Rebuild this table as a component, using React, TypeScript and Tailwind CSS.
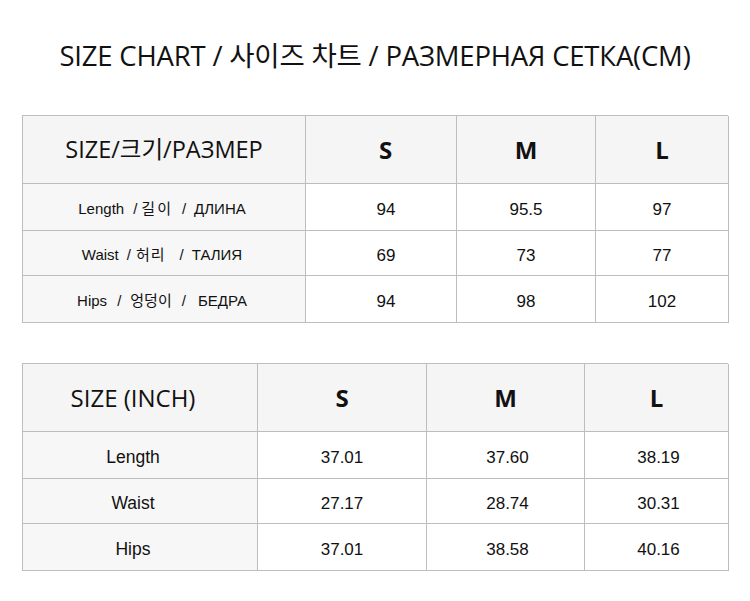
type Part = { text: string; cls: string };

const cmRows: { parts: Part[]; values: string[]; h: string }[] = [
  {
    parts: [
      { text: 'Length', cls: '' },
      { text: '/', cls: 'ml-[9px]' },
      { text: '길이', cls: 'ml-[4px] tracking-[2px]' },
      { text: '/', cls: 'ml-[9px]' },
      { text: 'ДЛИНА', cls: 'ml-[8px]' },
    ],
    values: ['94', '95.5', '97'],
    h: 'h-[47px]',
  },
  {
    parts: [
      { text: 'Waist', cls: '' },
      { text: '/', cls: 'ml-[8px]' },
      { text: '허리', cls: 'ml-[5px] tracking-[1px]' },
      { text: '/', cls: 'ml-[14px]' },
      { text: 'ТАЛИЯ', cls: 'ml-[8px]' },
    ],
    values: ['69', '73', '77'],
    h: 'h-[45px]',
  },
  {
    parts: [
      { text: 'Hips', cls: '' },
      { text: '/', cls: 'ml-[10px]' },
      { text: '엉덩이', cls: 'ml-[9px]' },
      { text: '/', cls: 'ml-[10px]' },
      { text: 'БЕДРА', cls: 'ml-[12px]' },
    ],
    values: ['94', '98', '102'],
    h: 'h-[47px]',
  },
];

const inchRows = [
  { label: 'Length', values: ['37.01', '37.60', '38.19'], h: 'h-[47px]' },
  { label: 'Waist', values: ['27.17', '28.74', '30.31'], h: 'h-[45px]' },
  { label: 'Hips', values: ['37.01', '38.58', '40.16'], h: 'h-[47px]' },
];

const cell = 'flex items-center justify-center border-r border-b border-[#bdbdbd]';
const sizes = ['S', 'M', 'L'];

const App = () => {
  return (
    <div className="w-[750px] h-[601px] bg-white text-[#111] overflow-hidden">
      {/* Title */}
      <div className="h-[115px] flex items-center justify-center pb-[3px]">
        <h1 className="text-[27.5px] font-['Open_Sans','Noto_Sans_CJK_KR',sans-serif] tracking-[-0.2px]">
          SIZE CHART / 사이즈 차트 / РАЗМЕРНАЯ СЕТКА(CM)
        </h1>
      </div>

      {/* CM table */}
      <div className="ml-[22px] w-[706px] border-l border-t border-[#bdbdbd] grid grid-cols-[283px_151px_139px_133px]">
        <div className={`${cell} h-[68px] bg-[#f5f5f5] text-[23.5px] font-['Open_Sans','Noto_Sans_CJK_KR',sans-serif]`}>
          SIZE/크기/РАЗМЕР
        </div>
        {sizes.map((s, i) => (
          <div
            key={s}
            className={`${cell} ${i === 0 ? 'pl-[9px]' : ''} h-[68px] bg-[#f5f5f5] text-[24px] font-bold font-['Open_Sans',sans-serif]`}
          >
            {s}
          </div>
        ))}
        {cmRows.map((row, r) => (
          <div key={r} className="contents">
            <div className={`${cell} ${row.h} pt-[5px] pr-[4px] bg-[#f7f7f7] text-[15px] font-['Liberation_Sans','Noto_Sans_CJK_KR',sans-serif]`}>
              {row.parts.map((p, k) => (
                <span key={k} className={p.cls}>
                  {p.text}
                </span>
              ))}
            </div>
            {row.values.map((v, i) => (
              <div
                key={i}
                className={`${cell} ${row.h} ${i === 0 ? 'pl-[10px]' : ''} pt-[6px] text-[17px] font-['Liberation_Sans',sans-serif]`}
              >
                {v}
              </div>
            ))}
          </div>
        ))}
      </div>

      {/* Inch table */}
      <div className="ml-[22px] mt-[40px] w-[706px] border-l border-t border-[#bdbdbd] grid grid-cols-[235px_169px_158px_144px]">
        <div className={`${cell} h-[68px] pr-[14px] bg-[#f5f5f5] text-[24px] font-['Open_Sans',sans-serif]`}>
          SIZE (INCH)
        </div>
        {sizes.map((s) => (
          <div key={s} className={`${cell} h-[68px] bg-[#f5f5f5] text-[24px] font-bold font-['Open_Sans',sans-serif]`}>
            {s}
          </div>
        ))}
        {inchRows.map((row) => (
          <div key={row.label} className="contents">
            <div className={`${cell} ${row.h} pr-[14px] bg-[#f7f7f7] text-[17.5px] pt-[4px] font-['Liberation_Sans',sans-serif]`}>
              {row.label}
            </div>
            {row.values.map((v, i) => (
              <div
                key={i}
                className={`${cell} ${row.h} ${i > 0 ? 'pl-[4px]' : ''} pt-[6px] text-[17px] font-['Liberation_Sans',sans-serif]`}
              >
                {v}
              </div>
            ))}
          </div>
        ))}
      </div>
    </div>
  );
};

export default App;
